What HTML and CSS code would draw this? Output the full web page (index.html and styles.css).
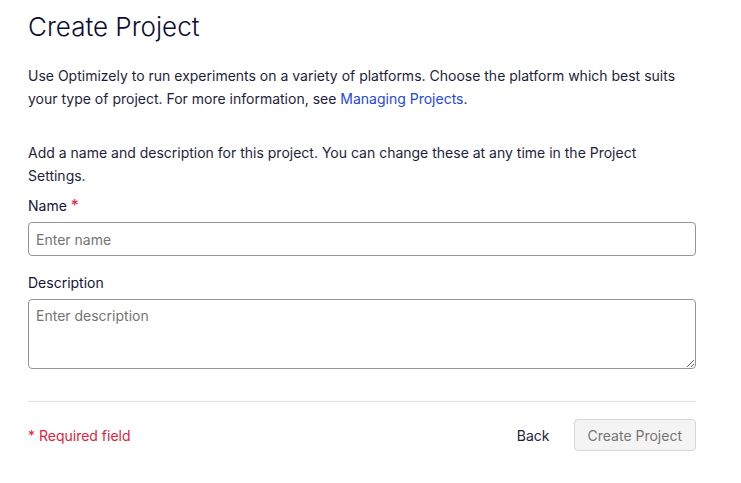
FILE: index.html
```html
<!DOCTYPE html>
<html lang="en">
<head>
    <meta charset="UTF-8">
    <meta name="viewport" content="width=device-width, initial-scale=1.0">
    <title>Create Project - Optimizely</title>
    <link rel="stylesheet" href="styles.css">
</head>
<body>
    <div class="page">
        <h1 class="page-title">Create Project</h1>
        <p class="intro">Use Optimizely to run experiments on a variety of platforms. Choose the platform which best suits your type of project. For more information, see <a href="#" class="link">Managing Projects</a>.</p>

        <form class="project-form">
            <p class="hint">Add a name and description for this project. You can change these at any time in the Project Settings.</p>
            <div class="form-group">
                <label for="project-name">Name <span class="req">*</span></label>
                <input type="text" id="project-name" placeholder="Enter name">
            </div>
            <div class="form-group">
                <label for="project-desc">Description</label>
                <textarea id="project-desc" placeholder="Enter description"></textarea>
            </div>
            <div class="form-footer">
                <span class="req-note">* Required field</span>
                <div class="actions">
                    <button type="button" class="back-btn">Back</button>
                    <button type="submit" class="create-btn" disabled>Create Project</button>
                </div>
            </div>
        </form>
    </div>
</body>
</html>
```

FILE: styles.css
```css
body {
    font-family: Inter, "Noto Sans", sans-serif;
    margin: 0;
    background-color: #fff;
    color: #1e1e3c;
}
.page {
    padding: 10px 45px 0 28px;
}
.page-title {
    font-size: 26px;
    font-weight: 300;
    color: #0c0c33;
    margin: 0 0 20px;
    line-height: 34px;
}
.intro,
.hint {
    font-size: 14px;
    line-height: 23px;
    margin: 0;
    max-width: 660px;
}
.intro {
    margin-bottom: 31px;
}
.hint {
    margin-bottom: 9px;
}
.link {
    color: #2447e0;
    text-decoration: none;
}
.form-group {
    margin-bottom: 17px;
}
.form-group label {
    display: block;
    font-size: 14px;
    line-height: 20px;
    margin-bottom: 6px;
    color: #14143a;
}
.req {
    color: #e0223b;
    font-size: 16px;
    line-height: 0;
}
.form-group input,
.form-group textarea {
    display: block;
    width: 100%;
    box-sizing: border-box;
    border: 1px solid #949494;
    border-radius: 4px;
    font-family: inherit;
    font-size: 14px;
    color: #1e1e3c;
    padding: 0 7px;
}
.form-group input {
    height: 34px;
}
.form-group textarea {
    height: 70px;
    padding-top: 7px;
    resize: vertical;
}
::placeholder {
    color: #747474;
}
.form-footer {
    border-top: 1px solid #e0e0e0;
    margin-top: 32px;
    padding-top: 17px;
    display: flex;
    justify-content: space-between;
    align-items: center;
}
.req-note {
    color: #e0223b;
    font-size: 14px;
}
.actions {
    display: flex;
    align-items: center;
    gap: 24px;
}
.back-btn {
    background: none;
    border: none;
    font-family: inherit;
    font-size: 14px;
    color: #1e1e3c;
    padding: 0;
    cursor: pointer;
}
.create-btn {
    font-family: inherit;
    font-size: 14px;
    color: #747474;
    background-color: #f4f4f4;
    border: 1px solid #d6d6d6;
    border-radius: 4px;
    height: 32px;
    padding: 0 13px;
}
```
